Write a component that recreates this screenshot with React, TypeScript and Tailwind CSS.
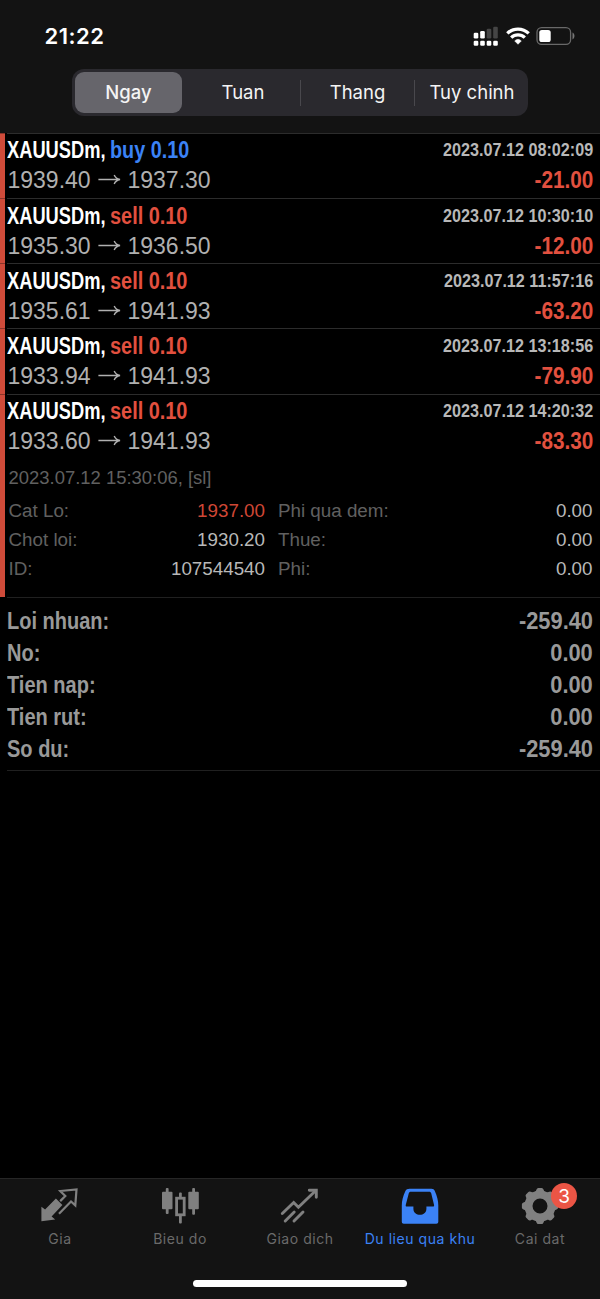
import React from "react";

type Deal = { side: "buy" | "sell"; open: string; close: string; time: string; profit: string };

const deals: Deal[] = [
  { side: "buy", open: "1939.40", close: "1937.30", time: "2023.07.12 08:02:09", profit: "-21.00" },
  { side: "sell", open: "1935.30", close: "1936.50", time: "2023.07.12 10:30:10", profit: "-12.00" },
  { side: "sell", open: "1935.61", close: "1941.93", time: "2023.07.12 11:57:16", profit: "-63.20" },
  { side: "sell", open: "1933.94", close: "1941.93", time: "2023.07.12 13:18:56", profit: "-79.90" },
  { side: "sell", open: "1933.60", close: "1941.93", time: "2023.07.12 14:20:32", profit: "-83.30" },
];

const details = [
  ["Cat Lo:", "1937.00", "Phi qua dem:", "0.00"],
  ["Chot loi:", "1930.20", "Thue:", "0.00"],
  ["ID:", "107544540", "Phi:", "0.00"],
];

const summary = [
  ["Loi nhuan:", "-259.40"],
  ["No:", "0.00"],
  ["Tien nap:", "0.00"],
  ["Tien rut:", "0.00"],
  ["So du:", "-259.40"],
];

function StatusIcons() {
  return (
    <svg width="104" height="22" viewBox="0 0 104 22" className="block">
      <g fill="#fff">
        <rect x="1.7" y="7.7" width="4.6" height="5.8" rx="1.3" />
        <rect x="8.2" y="6" width="4.6" height="7.5" rx="1.3" />
        <rect x="14.7" y="3.7" width="4.6" height="9.8" rx="1.3" fill="#454545" />
        <rect x="21.2" y="1.7" width="4.6" height="11.8" rx="1.3" fill="#454545" />
        <rect x="1.7" y="15.7" width="4.6" height="5" rx="1.3" />
        <rect x="8.2" y="15.7" width="4.6" height="5" rx="1.3" />
        <rect x="14.7" y="15.7" width="4.6" height="5" rx="1.3" />
        <rect x="21.2" y="15.7" width="4.6" height="5" rx="1.3" />
      </g>
      <g fill="none" stroke="#fff" strokeWidth="3.3">
        <path d="M35.3 8.4a15.3 15.3 0 0 1 21.4 0" />
        <path d="M39.2 12.6a9.7 9.7 0 0 1 13.6 0" />
      </g>
      <path d="M46 19.3l-3.3-3.4a4.8 4.8 0 0 1 6.6 0z" fill="#fff" stroke="#fff" strokeWidth=".5" strokeLinejoin="round" />
      <rect x="65" y="2.7" width="33.6" height="16.6" rx="4.6" fill="none" stroke="#696969" strokeWidth="1.3" />
      <rect x="67.3" y="5" width="11.4" height="12" rx="2.6" fill="#fff" />
      <path d="M100.500 7.600c2.600 1.200 2.600 5.600 0 6.800z" fill="#777" />
    </svg>
  );
}

function Arrow() {
  return (
    <svg width="24" height="14" viewBox="0 0 24 14" className="ml-[6px] mr-[6px] block shrink-0" fill="none" stroke="#b0b0b0" strokeWidth="1.400">
      <path d="M.4 6.500h21.400M16.200 2c1 2.400 2.800 3.900 5.800 4.500c-3 .6-4.800 2.100-5.800 4.500" />
    </svg>
  );
}

function DealRow({ deal }: { deal: Deal }) {
  return (
    <div className="ml-[2px] h-[65.17px] border-t border-[#2c2c2c] pr-[7px] pt-[1.4px]">
      <div className="flex h-[30px] items-center justify-between whitespace-nowrap font-bold">
        <div className="flex text-[23px] leading-[30px]">
          <span className="block w-[103px] origin-left scale-x-[0.795] text-white">XAUUSDm,</span>
          {deal.side === "buy" ? (
            <span className="block w-[80px] origin-left scale-x-[0.86] text-[#3b82f6]">buy 0.10</span>
          ) : (
            <span className="block w-[80px] origin-left scale-x-[0.865] text-[#e2503f]">sell 0.10</span>
          )}
        </div>
        <span className="block origin-right scale-x-[0.898] text-[18px] leading-[30px] text-[#b8b8b8]">{deal.time}</span>
      </div>
      <div className="flex h-[30px] items-center justify-between whitespace-nowrap">
        <div className="flex items-center pl-[0.5px] text-[23px] leading-[30px] text-[#b0b0b0]">
          <span className="block w-[84px]">{deal.open}</span>
          <Arrow />
          <span>{deal.close}</span>
        </div>
        <span className="block origin-right scale-x-[0.9] text-[23px] font-bold leading-[30px] text-[#e2503f]">{deal.profit}</span>
      </div>
    </div>
  );
}

function PriceIcon() {
  return (
    <svg width="40" height="40" viewBox="0 0 40 40">
      <path d="M1.400 20.700l3.700 2.700L15.900 12.500l6.500 6.600l-10.800 11.400l3.600 2.900L1.400 35.200z" fill="#808080" />
      <path d="M19 27.700L31 15.500l4.300 3.900l1.200-16l-16.200 1.600l5 5l-5.100 5.100" fill="none" stroke="#808080" strokeWidth="2.200" />
    </svg>
  );
}

function CandleIcon() {
  return (
    <svg width="40" height="40" viewBox="0 0 40 40" fill="#808080">
      <rect x="5.800" y="2" width="2.800" height="26" rx="1" />
      <rect x="2" y="5.700" width="10.500" height="17.500" rx="1" />
      <rect x="32.200" y="2" width="2.800" height="26.700" rx="1" />
      <rect x="28.300" y="5.700" width="10.500" height="17.500" rx="1" />
      <rect x="19" y="6.500" width="2.800" height="5" rx="1" />
      <rect x="19" y="29" width="2.800" height="8.500" rx="1" />
      <rect x="16.600" y="12.200" width="7.600" height="16.600" fill="none" stroke="#808080" strokeWidth="2.800" />
    </svg>
  );
}

function TradeIcon() {
  return (
    <svg width="40" height="40" viewBox="0 0 40 40" fill="none" stroke="#808080" strokeWidth="2.900" className="relative left-[-1px]">
      <path d="M3.300 27.500L14.700 16.500l4.700 4.700L36.300 5" strokeLinecap="round" />
      <path d="M30.300 4.300h7v7" strokeLinecap="round" />
      <path d="M6.200 35L15.200 26M15 35L24 26" strokeLinecap="round" />
    </svg>
  );
}

function HistoryIcon() {
  return (
    <svg width="40" height="40" viewBox="0 0 40 40" className="relative left-[-0.5px]">
      <path
        fillRule="evenodd"
        fill="#3b82f6"
        d="M9.500 2.800h22c1.500 0 2.700.8 3.300 2.100c2.300 5 3.500 10 3.500 14.600v16.200c0 1.200-.8 2-2 2H3.800c-1.200 0-2-.8-2-2V19.500c0-4.600 1.200-9.600 3.600-14.600c.7-1.300 2.200-2.100 4.100-2.100zM10.800 5.700c-1 0-1.600.5-2 1.500L5.800 18.700c-.3 1.300 0 1.900 1.300 1.900h6.300v2.200c0 8 13 8 13 0v-2.200h6.300c1.300 0 1.600-.6 1.300-1.900L31.200 7.200c-.4-1-1-1.500-2-1.500z"
      />
    </svg>
  );
}

function GearIcon() {
  const angles = [0, 45, 90, 135, 180, 225, 270, 315];
  return (
    <svg width="40" height="40" viewBox="0 0 40 40">
      <circle cx="20" cy="20" r="11.500" fill="none" stroke="#808080" strokeWidth="8" />
      {angles.map((a) => (
        <path key={a} d="M14.500 6.500Q16 5.500 16.500 3.500Q17 2 18.300 1.900h3.400Q23 2 23.500 3.500Q24 5.500 25.500 6.500z" fill="#808080" transform={`rotate(${a} 20 20)`} />
      ))}
    </svg>
  );
}

const tabs = [
  { label: "Gia", icon: <PriceIcon />, active: false },
  { label: "Bieu do", icon: <CandleIcon />, active: false },
  { label: "Giao dich", icon: <TradeIcon />, active: false },
  { label: "Du lieu qua khu", icon: <HistoryIcon />, active: true },
  { label: "Cai dat", icon: <GearIcon />, active: false, badge: "3" },
];

export default function App() {
  return (
    <div className="flex h-[1299px] w-[600px] flex-col overflow-hidden bg-black font-['Liberation_Sans',sans-serif]">
      <header className="h-[133px] shrink-0 bg-[#131313] font-['Inter',sans-serif]">
        <div className="flex h-[69px] items-start justify-between pl-[44.5px] pr-[24px] pt-[25px]">
          <span className="text-[22px] font-semibold leading-[22px] tracking-[0.5px] text-white">21:22</span>
          <StatusIcons />
        </div>
        <div className="ml-[72px] flex h-[47px] w-[456px] items-center rounded-[12px] bg-[#2a292e] p-[3px] text-[18.5px] text-[#f4f4f4]">
          <div className="flex h-[41px] w-[107px] items-center justify-center rounded-[9px] bg-[#66656b] pt-[1px] font-medium">Ngay</div>
          <div className="flex h-[26px] w-[119px] items-center justify-center border-r border-[#49484d] pl-[4px] pt-[1px]">Tuan</div>
          <div className="flex h-[26px] w-[114px] items-center justify-center border-r border-[#49484d] pt-[1px]">Thang</div>
          <div className="flex h-[26px] flex-1 items-center justify-center whitespace-nowrap pl-[4px] pt-[1px]">Tuy chinh</div>
        </div>
      </header>

      <main className="flex-1">
        <div className="flex h-[464px]">
          <div className="flex w-[5px] flex-col bg-[#cf4b3a]">
            {deals.map((d) => (
              <div key={d.time} className="h-[65.17px] border-t border-[#8a3429]" />
            ))}
          </div>
          <div className="flex-1">
            {deals.map((d) => (
              <DealRow key={d.time} deal={d} />
            ))}
            <div className="pl-[3.5px] pr-[7.5px] text-[18.8px] text-[#606060]">
              <div className="h-[37px] whitespace-nowrap text-[18.45px] leading-[38px]">2023.07.12 15:30:06, [sl]</div>
              {details.map(([a, b, c, d], i) => (
                <div key={a} className="flex h-[29px] whitespace-nowrap leading-[29px]">
                  <span className="w-[100px]">{a}</span>
                  <span className={i === 0 ? "w-[156.5px] text-right text-[#cf4735]" : "w-[156.5px] text-right text-[#b8b8b8]"}>{b}</span>
                  <span className="flex-1 pl-[13px]">{c}</span>
                  <span className="text-[#b8b8b8]">{d}</span>
                </div>
              ))}
            </div>
          </div>
        </div>
        <div className="ml-[7px] h-[174px] border-y border-[#202020] pr-[7px] pt-[7px] text-[23px] font-bold text-[#999]">
          {summary.map(([label, value]) => (
            <div key={label} className="flex h-[32px] justify-between whitespace-nowrap leading-[32px]">
              <span className="block origin-left scale-x-[0.87]">{label}</span>
              <span className="block origin-right scale-x-[0.95]">{value}</span>
            </div>
          ))}
        </div>
      </main>

      <footer className="flex h-[121px] shrink-0 flex-col items-center border-t border-[#262626] bg-[#131313] font-['Inter',sans-serif]">
        <nav className="flex h-[101px] w-full">
          {tabs.map((t) => (
            <div key={t.label} className={t.active ? "flex w-[120px] flex-col items-center pt-[7px] text-[#3b82f6]" : "flex w-[120px] flex-col items-center pt-[7px] text-[#6a6a6a]"}>
              <div className="relative size-[40px]">
                {t.icon}
                {t.badge && (
                  <span className="absolute left-[31px] top-[-3px] flex size-[26px] items-center justify-center rounded-full bg-[#eb5545] text-[19px] leading-none text-white">{t.badge}</span>
                )}
              </div>
              <span className="mt-[3px] whitespace-nowrap text-[14px] leading-[20px] tracking-[0.55px]">{t.label}</span>
            </div>
          ))}
        </nav>
        <div className="h-[7px] w-[214px] rounded-full bg-white" />
      </footer>
    </div>
  );
}
